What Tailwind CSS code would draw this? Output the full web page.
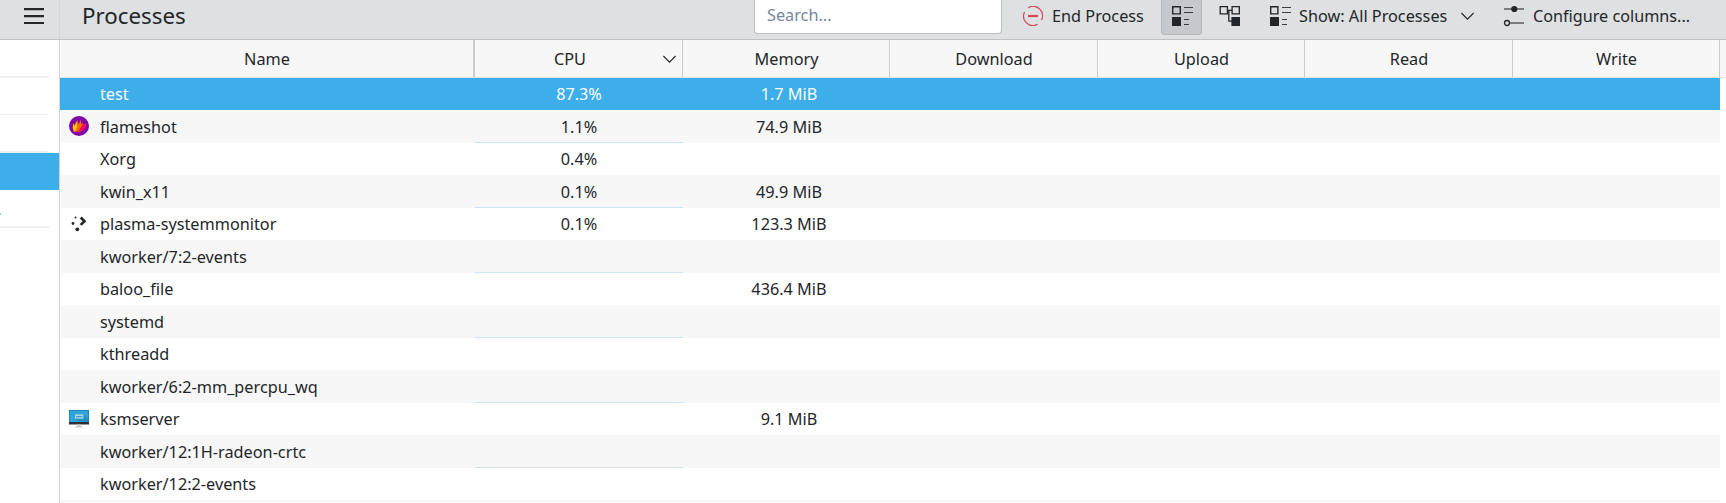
<!DOCTYPE html>
<html lang="en">
<head>
<meta charset="utf-8">
<title>Processes</title>
<script src="https://cdn.jsdelivr.net/npm/@tailwindcss/browser@4"></script>
</head>
<body class="h-[503px] w-[1726px] overflow-hidden bg-white font-['Noto_Sans',sans-serif] text-[16.25px] text-[#232629]">
<div class="flex h-[503px] overflow-hidden">
  <!-- Sidebar -->
  <aside class="flex w-[59px] shrink-0 flex-col">
    <div class="h-10 shrink-0 border-b border-[#bfc1c3] bg-[#dee0e2] pt-2 pl-6">
      <svg class="block" width="21" height="16" viewBox="0 0 21 16" fill="#232629"><path d="M0 0h20v2.2H0zM0 7h20v2.2H0zM0 14h20v2H0z"/></svg>
    </div>
    <div class="h-[38px] w-[49px] shrink-0 border-b-2 border-[#efefef]"></div>
    <div class="h-[37px] w-[49px] shrink-0 border-b border-[#efefef]"></div>
    <div class="h-[38px] w-[49px] shrink-0 border-b-2 border-[#efefef]"></div>
    <div class="h-[37px] shrink-0 bg-[#3daee9]"></div>
    <div class="h-[38px] w-[49px] shrink-0 border-b-2 border-[#efefef] pt-[23px]"><div class="h-0.5 w-px bg-[#8fd3f5]"></div></div>
  </aside>
  <div class="flex w-px shrink-0 flex-col"><div class="h-10 border-b border-[#bfc1c3] bg-[#d3d5d7]"></div><div class="grow bg-[#d3d4d5]"></div></div>

  <main class="flex grow flex-col">
    <!-- Toolbar -->
    <header class="flex h-10 shrink-0 items-start border-b border-[#bfc1c3] bg-[#dee0e2]">
      <h1 class="ml-[21px] w-[673px] shrink-0 pl-px text-[22.3px] leading-[31px]">Processes</h1>
      <div class="h-[34px] w-[248px] shrink-0 rounded-b-[4px] border border-t-0 border-[#bec0c3] bg-white pl-3 leading-[31px] text-[#75879a]">Search...</div>
      <div class="ml-[21px] flex h-8 shrink-0 items-center">
        <svg width="20" height="20" viewBox="0 0 20 20" fill="none" stroke="#da4453" stroke-width="1.2"><path d="M5.300 1.700A9.400 9.400 0 0 1 18.500 14"/><path d="M14.500 18.300A9.400 9.400 0 0 1 1.500 6"/><path d="M5 10h10" stroke-width="2.2"/></svg>
        <span class="ml-[9px] w-[109px] whitespace-nowrap leading-8">End Process</span>
      </div>
      <div class="flex h-[35px] w-[41px] shrink-0 justify-center rounded-b-[4px] border border-t-0 border-[#b3b7ba] bg-[#c5c9cc] pt-[5px]">
        <svg width="22" height="22" viewBox="0 0 22 22"><path d="M1.700 1.700h7.600v7.200H1.700z" fill="none" stroke="#232629" stroke-width="1.4"/><path d="M1 12h9v9H1z" fill="#232629"/><path d="M13 2.500h9M13 7.500h9M13 14.500h5M13 19.500h5" stroke="#3b3e41" stroke-width="1.2"/></svg>
      </div>
      <svg class="mt-[5px] ml-[17px] shrink-0" width="21" height="22" viewBox="0 0 21 22"><path d="M1.200 1.700h7.200v7.200H1.200zM13.100 1.700h7.200v7.200h-7.200zM8.500 5.300h4.600M9.800 5.300v10.900h4" fill="none" stroke="#232629" stroke-width="1.3"/><path d="M12.400 12H21v9h-8.600z" fill="#232629"/></svg>
      <svg class="mt-[5px] ml-[29px] shrink-0" width="22" height="22" viewBox="0 0 22 22"><path d="M1.700 1.700h7.200v7.200H1.700z" fill="none" stroke="#232629" stroke-width="1.4"/><path d="M1 12h9v9H1z" fill="#232629"/><path d="M13 2.500h9M13 7.500h9M13 14.500h5M13 19.500h5" stroke="#3b3e41" stroke-width="1.2"/></svg>
      <span class="ml-2 w-[162px] shrink-0 whitespace-nowrap leading-8">Show: All Processes</span>
      <svg class="mt-[12px] shrink-0" width="13" height="9" viewBox="0 0 13 9" fill="none" stroke="#232629" stroke-width="1.1"><path d="M.4 1l6.100 6.200L12.600 1"/></svg>
      <svg class="mt-[5px] ml-[29px] shrink-0" width="22" height="22" viewBox="0 0 22 22"><path d="M1 4h20M7 18h14" stroke="#5b5e61" stroke-width="1.4"/><circle cx="11.300" cy="4" r="3.100" fill="#232629"/><circle cx="4" cy="18" r="2.500" fill="none" stroke="#232629" stroke-width="1.3"/></svg>
      <span class="ml-2 shrink-0 whitespace-nowrap text-[16.2px] leading-8">Configure columns...</span>
    </header>

    <!-- Column titles -->
    <div class="flex h-[38px] shrink-0 border-b border-[#e3e3e3] bg-[#f7f7f7] text-center leading-[39px]">
      <div class="w-[415px] border-r-2 border-[#cacbcc] pl-px">Name</div>
      <div class="flex w-[208px] items-start border-r border-[#cacbcc] pl-[26px]">
        <span class="w-[138px]">CPU</span>
        <svg class="mt-[15px] ml-6" width="13" height="9" viewBox="0 0 13 9" fill="none" stroke="#232629" stroke-width="1.1"><path d="M.4 1l6.100 6.200L12.600 1"/></svg>
      </div>
      <div class="w-[207px] border-r border-[#cacbcc] pl-px">Memory</div>
      <div class="w-[208px] border-r border-[#cacbcc] pl-px">Download</div>
      <div class="w-[207px] border-r border-[#cacbcc] pl-px">Upload</div>
      <div class="w-[208px] border-r border-[#cacbcc] pl-px">Read</div>
      <div class="w-[207px] border-r border-[#cacbcc] pl-px">Write</div>
    </div>

    <!-- Process rows -->
    <div class="w-[1660px] whitespace-nowrap leading-8">
      <div class="flex h-8 bg-[#3daee9] text-[#fcfcfc]"><div class="w-[415px] pl-10">test</div><div class="w-[208px] text-center">87.3%</div><div class="w-[207px] pl-[5px] text-center">1.7 MiB</div></div>
      <div class="flex h-[33px] bg-[#f7f7f7] leading-[34px]"><div class="flex w-[415px] items-start pl-[9px]">
        <svg class="mt-1.5 mr-[11px]" width="20" height="20" viewBox="0 0 20 20"><circle cx="10" cy="10" r="10" fill="#8304a9"/><path d="M5 15.500C3 12 4 9.500 4.500 7.500l1.200 2C6 7.500 7 5.500 8.500 4c-.2 2 .3 3.500.3 5C9.800 7.500 11 5.500 12 3.800v4l2-1-.4 2.200L17 7.500C16.500 12 14 15 10 15.800z" fill="#ff6a00"/><path d="M5 15.500C3.200 12.500 3.900 9.500 4.500 7.500l1.200 2.500L8.200 5C8.500 8.500 8.500 12 5.800 15.600z" fill="#ffc800"/><path d="M8 15.800c3-1 3-4.500 5.300-6.600L17 7.500C16.500 12 14 15 8 15.800z" fill="#ff0066"/></svg>flameshot</div><div class="w-[208px] border-b border-[#cbe5f3] text-center">1.1%</div><div class="w-[207px] pl-[5px] text-center">74.9 MiB</div></div>
      <div class="flex h-8"><div class="w-[415px] pl-10">Xorg</div><div class="w-[208px] text-center">0.4%</div></div>
      <div class="flex h-[33px] bg-[#f7f7f7] leading-[34px]"><div class="w-[415px] pl-10">kwin_x11</div><div class="w-[208px] border-b border-[#cbe5f3] text-center">0.1%</div><div class="w-[207px] pl-[5px] text-center">49.9 MiB</div></div>
      <div class="flex h-8"><div class="flex w-[415px] items-center pl-[9px]">
        <svg class="mr-[11px]" width="20" height="20" viewBox="0 0 20 20" fill="#232629"><circle cx="6.500" cy="3.500" r="1"/><circle cx="4" cy="9.500" r="1.400"/><circle cx="8.300" cy="15.300" r="1.900"/><path d="M11.700 3.500L15.500 7.200l-3.800 3.700" fill="none" stroke="#232629" stroke-width="2.600"/></svg>plasma-systemmonitor</div><div class="w-[208px] text-center">0.1%</div><div class="w-[207px] pl-[5px] text-center">123.3 MiB</div></div>
      <div class="flex h-[33px] bg-[#f7f7f7] leading-[34px]"><div class="w-[415px] pl-10">kworker/7:2-events</div><div class="w-[208px] border-b border-[#cbe5f3]"></div></div>
      <div class="flex h-8"><div class="w-[415px] pl-10">baloo_file</div><div class="w-[208px]"></div><div class="w-[207px] pl-[5px] text-center">436.4 MiB</div></div>
      <div class="flex h-[33px] bg-[#f7f7f7] leading-[34px]"><div class="w-[415px] pl-10">systemd</div><div class="w-[208px] border-b border-[#cbe5f3]"></div></div>
      <div class="flex h-8"><div class="w-[415px] pl-10">kthreadd</div></div>
      <div class="flex h-[33px] bg-[#f7f7f7] leading-[34px]"><div class="w-[415px] pl-10">kworker/6:2-mm_percpu_wq</div><div class="w-[208px] border-b border-[#cbe5f3]"></div></div>
      <div class="flex h-8"><div class="flex w-[415px] items-center pl-[9px]">
        <svg class="mr-[11px]" width="20" height="20" viewBox="0 0 20 20"><path d="M0 1h20v12.500H0z" fill="#2ea5dc"/><path d="M0 1h20v.8H0zM0 1h.7v12.500H0zM19.300 1h.7v12.500h-.7z" fill="#1d7cab"/><path d="M14 5l5.300 5v3H10L6 10z" fill="#2390c4"/><path d="M6 5.300h8.500v4.400H6z" fill="#a9d6ec"/><path d="M7 7h6.500v1.300H7z" fill="#4c9fc8"/><path d="M0 13h20v2.500H0z" fill="#2c3134"/><path d="M8 15.500h4v2h2v1H6v-1h2z" fill="#c9cdd0"/></svg>ksmserver</div><div class="w-[208px]"></div><div class="w-[207px] pl-[5px] text-center">9.1 MiB</div></div>
      <div class="flex h-[33px] bg-[#f7f7f7] leading-[34px]"><div class="w-[415px] pl-10">kworker/12:1H-radeon-crtc</div><div class="w-[208px] border-b border-[#cbe5f3]"></div></div>
      <div class="flex h-8"><div class="w-[415px] pl-10">kworker/12:2-events</div></div>
      <div class="h-[33px] bg-[#f7f7f7]"></div>
    </div>
  </main>
</div>
</body>
</html>
